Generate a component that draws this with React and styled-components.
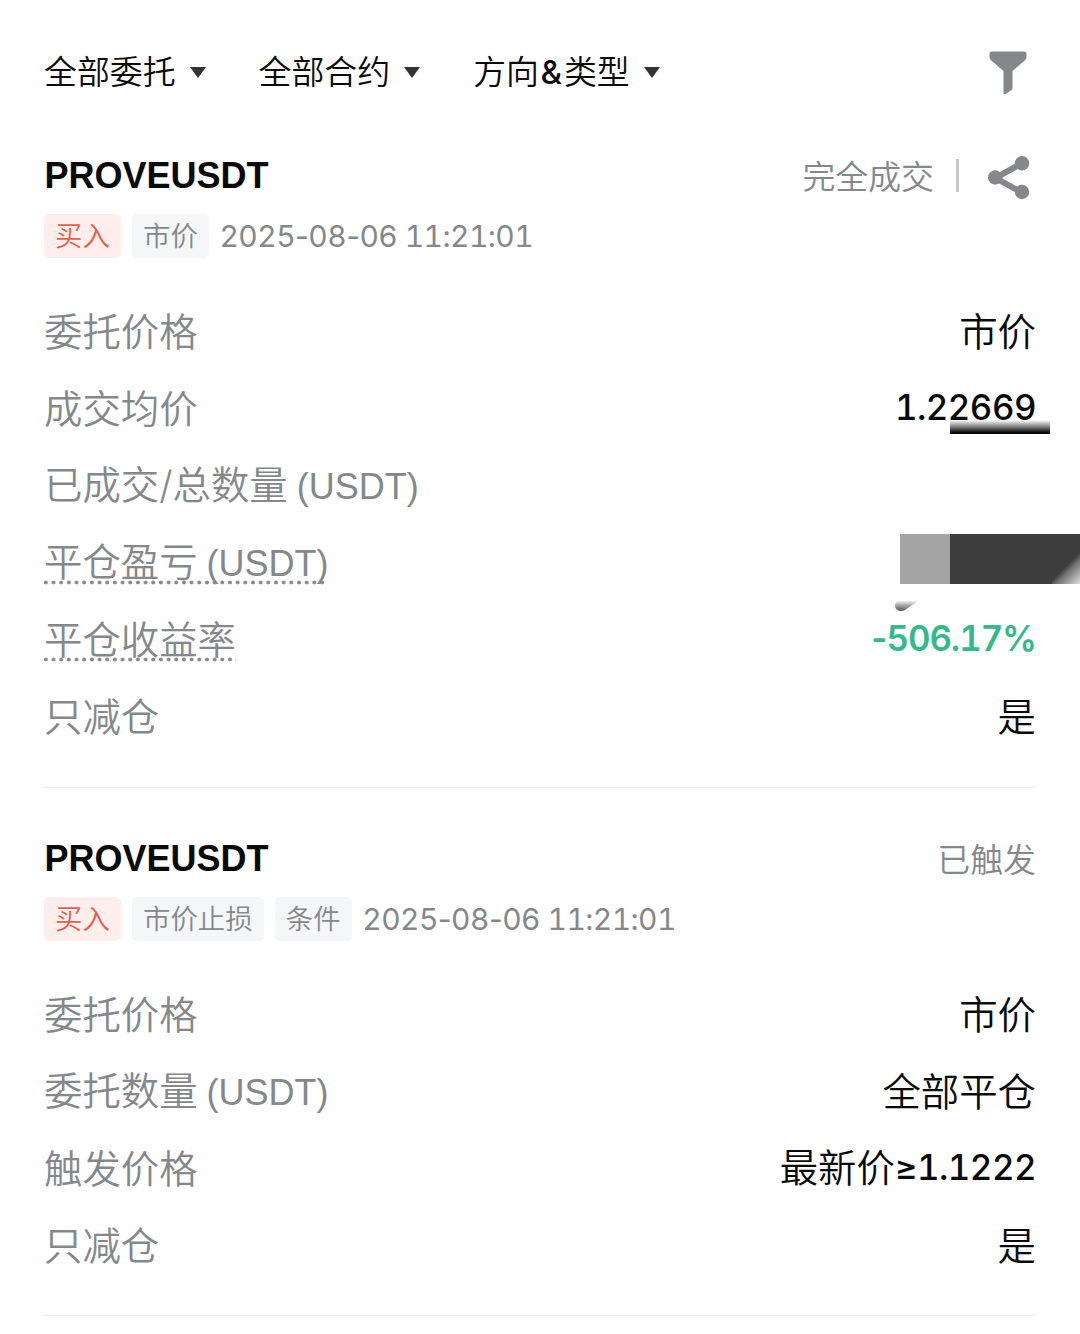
import React from 'react'
import styled, { createGlobalStyle } from 'styled-components'

const orders = [
  {
    symbol: 'PROVEUSDT',
    status: '完全成交',
    canShare: true,
    tags: ['市价'],
    time: '2025-08-06 11:21:01',
    rows: [
      { label: '委托价格', value: '市价' },
      { label: '成交均价', number: '1.22669', mark: 'stroke' },
      { label: '已成交/总数量', unit: '(USDT)' },
      { label: '平仓盈亏', unit: '(USDT)', hint: true, mark: 'block' },
      { label: '平仓收益率', number: '-506.17%', hint: true, green: true },
      { label: '只减仓', value: '是' },
    ],
  },
  {
    symbol: 'PROVEUSDT',
    status: '已触发',
    tags: ['市价止损', '条件'],
    time: '2025-08-06 11:21:01',
    rows: [
      { label: '委托价格', value: '市价' },
      { label: '委托数量', unit: '(USDT)', value: '全部平仓' },
      { label: '触发价格', value: '最新价', number: '≥1.1222' },
      { label: '只减仓', value: '是' },
    ],
  },
]

// tabular digits, but the hyphens between them keep their own width
const Digits = ({ text }) =>
  text.split(/(-)/).map((part, i) =>
    part === '-' ? <Hyphen key={i}>-</Hyphen> : part
  )

const Order = ({ order }) => (
  <Card>
    <TitleRow>
      <Symbol>{order.symbol}</Symbol>
      <Status>
        {order.status}
        {order.canShare && (
          <>
            <Separator />
            <ShareIcon />
          </>
        )}
      </Status>
    </TitleRow>
    <TagRow>
      <Tag $buy>买入</Tag>
      {order.tags.map((tag) => <Tag key={tag}>{tag}</Tag>)}
      <Time><Digits text={order.time} /></Time>
    </TagRow>
    <Rows>
      {order.rows.map((row) => (
        <Row key={row.label}>
          <Label $hint={row.hint}>
            {row.label}
            {row.unit && <Unit>{row.unit}</Unit>}
          </Label>
          <Value $green={row.green}>
            {row.value}
            {row.number && <Num $green={row.green}><Digits text={row.number} /></Num>}
          </Value>
          {row.mark === 'stroke' && <Stroke />}
          {row.mark === 'block' && <><Block /><Blob /></>}
        </Row>
      ))}
    </Rows>
  </Card>
)

const ShareIcon = () => (
  <svg width="42" height="44" viewBox="0 0 42 44" fill="#84888a">
    <path d="M34 7.3 L7.2 22 L34 36.5" fill="none" stroke="#84888a" strokeWidth="6" />
    <circle cx="34" cy="7.3" r="7.2" />
    <circle cx="7.2" cy="21.500" r="7.2" />
    <circle cx="34" cy="36" r="7.2" />
  </svg>
)

const Blob = () => (
  <BlobSvg width="28" height="14" viewBox="0 0 28 14">
    <defs>
      <linearGradient id="blob" x1="0" y1="0" x2="0" y2="1">
        <stop offset="0.05" stopColor="#fff" />
        <stop offset="0.5" stopColor="#aaa" />
        <stop offset="1" stopColor="#555" />
      </linearGradient>
    </defs>
    <path d="M1 7.500 Q1 4 4 3 L26 1.500 L11 12 Q8 13.500 5 12.800 Q1 11.500 1 7.500Z" fill="url(#blob)" />
  </BlobSvg>
)

const App = () => (
  <>
    <GlobalStyle />
    <Page>
      <Filters>
        <Filter>全部委托<Caret /></Filter>
        <Filter>全部合约<Caret /></Filter>
        <Filter>方向<Amp>&amp;</Amp>类型<Caret /></Filter>
        <FunnelIcon width="38" height="44" viewBox="0 0 38 44">
          <path
            d="M3 0.500 H35 Q37.500 0.500 37.500 3 V6 Q37.500 8 36 9.300 L23.500 20 V37 Q23.500 38.500 22.300 39.300 L16.500 43 Q14.500 43.800 14.500 42 V20 L2 9.300 Q0.500 8 0.500 6 V3 Q0.500 0.500 3 0.500Z"
            fill="#84888a"
          />
        </FunnelIcon>
      </Filters>
      {orders.map((order, i) => <Order key={i} order={order} />)}
    </Page>
  </>
)

const GlobalStyle = createGlobalStyle`
  body {
    margin: 0;
    background: #fff;
  }
`

const Page = styled.main`
  box-sizing: border-box;
  width: 1080px;
  height: 1334px;
  overflow: hidden;
  padding: 36px 44px 0;
  color: #0a0a0a;
  font-family: Inter, 'Noto Sans CJK SC', sans-serif;
  font-weight: 350;
  font-feature-settings: 'tnum';
  white-space: nowrap;
`

const Filters = styled.nav`
  display: flex;
  align-items: center;
  height: 72px;
  gap: 53px;
`

const Filter = styled.div`
  display: flex;
  align-items: center;
  font-size: 32.9px;
  line-height: 48px;
`

const Amp = styled.span`
  padding: 0 2px 0 1.5px;
  font-size: 33px;
  font-weight: 500;
`

const Caret = styled.i`
  margin-left: 14px;
  border: 8px solid transparent;
  border-top: 11px solid #333;
  border-bottom: 0;
`

const FunnelIcon = styled.svg`
  margin: 2px 9px 0 auto;
`

const Card = styled.section`
  height: 679px;
  border-bottom: 1px solid #f0f0f0;

  & + & {
    height: 524px;
    padding-top: 3px;
  }
`

const TitleRow = styled.header`
  display: flex;
  align-items: center;
  justify-content: space-between;
  height: 44px;
  padding-top: 47px;
`

const Symbol = styled.h2`
  margin: -2px 0 0 0.500px;
  font-family: 'Liberation Sans', Arial, sans-serif;
  font-size: 36px;
  font-weight: 700;
  line-height: 42px;
`

const Status = styled.div`
  display: flex;
  align-items: center;
  color: #84888a;
  font-size: 32.9px;
  line-height: 44px;

  svg {
    margin: 1px 6px -1px 29px;
  }
`

const Separator = styled.i`
  width: 3px;
  height: 33px;
  margin: -3px 0 0 22px;
  background: #c8c9cb;
`

const TagRow = styled.div`
  display: flex;
  align-items: center;
  gap: 11px;
  height: 44px;
  margin-top: 15px;
`

const Tag = styled.span`
  height: 44px;
  padding: 0 11.1px;
  border-radius: 5px;
  background: ${(p) => (p.$buy ? '#ffeeec' : '#f4f6f8')};
  color: ${(p) => (p.$buy ? '#e2604f' : '#84888a')};
  font-size: 27.4px;
  line-height: 44px;
`

const Time = styled.time`
  margin-left: -0.5px;
  color: #84888a;
  font-size: 30px;
  font-weight: 400;
  letter-spacing: -0.55px;
`

const Hyphen = styled.span`
  font-feature-settings: normal;
`

const Rows = styled.div`
  margin-top: 35px;
`

const Row = styled.div`
  position: relative;
  display: flex;
  align-items: center;
  justify-content: space-between;
  height: 77px;
`

const Label = styled.span`
  padding: 2px 0 1px;
  color: #84888a;
  font-size: 38.4px;
  line-height: 41px;
  ${(p) => p.$hint && `
    background: radial-gradient(circle, #84888a 1.500px, transparent 2.300px) -2px 100% / 7.68px 5px repeat-x;
  `}
`

const Unit = styled.span`
  margin: 0 -2px 0 9px;
  font-family: 'Liberation Sans', Arial, sans-serif;
  font-size: 36px;
  font-weight: 400;
`

const Value = styled.span`
  color: ${(p) => (p.$green ? '#35b88a' : '#0a0a0a')};
  font-size: 38.4px;
  line-height: 40px;
`

const Num = styled.span`
  position: relative;
  top: -2px;
  font-size: 34.8px;
  font-weight: ${(p) => (p.$green ? 600 : 520)};
  letter-spacing: ${(p) => (p.$green ? -1.05 : -0.5)}px;
`

// marker smears drawn over the numbers
const Stroke = styled.i`
  position: absolute;
  top: 50px;
  right: -14px;
  width: 100px;
  height: 14px;
  background: linear-gradient(to bottom, transparent, #888 45%, #080808 90%);
`

const Block = styled.i`
  position: absolute;
  top: 10px;
  right: -44px;
  width: 180px;
  height: 50px;
  background:
    linear-gradient(135deg, #3d3d3d 45%, #777 60%, #ddd) 100% 100% / 28px 30px no-repeat,
    linear-gradient(to right, #a4a4a4 50px, #3d3d3d 50px);
`

const BlobSvg = styled.svg`
  position: absolute;
  top: 74px;
  left: 850px;
`

export default App
